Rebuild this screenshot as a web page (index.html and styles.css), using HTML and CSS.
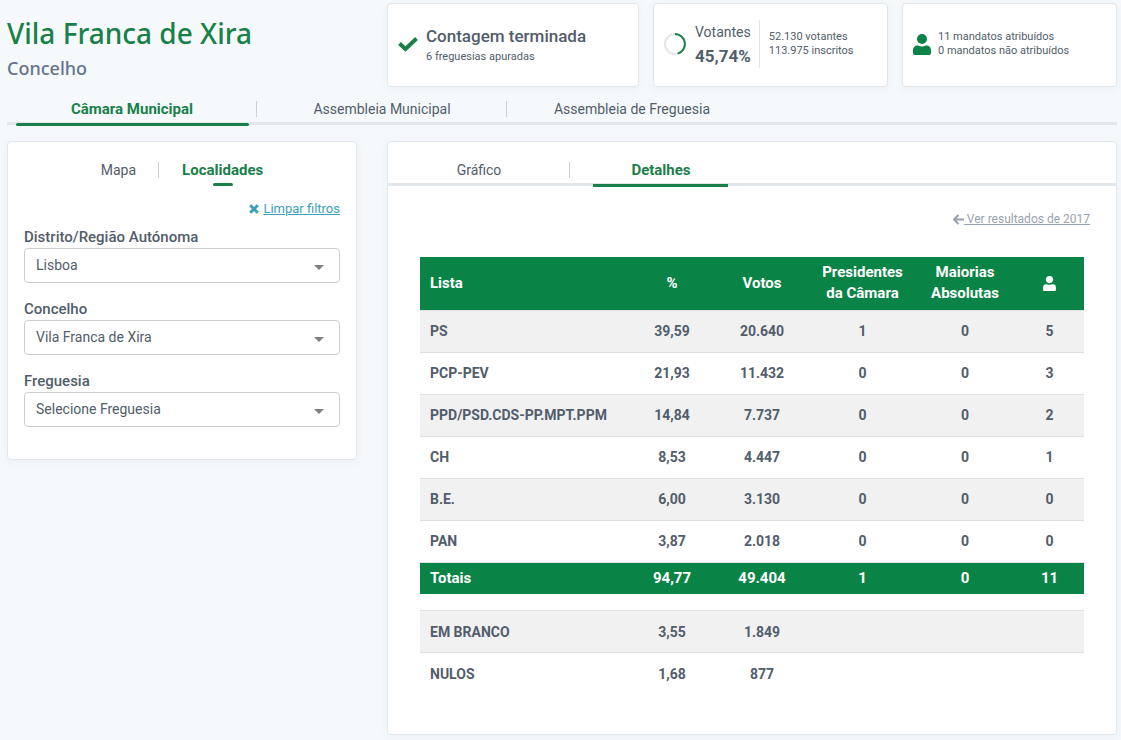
FILE: index.html
```html
<!doctype html>
<html lang="pt">
    <head>
        <meta charset="utf-8">
        <meta name="viewport" content="width=device-width, initial-scale=1">
        <title>Vila Franca de Xira - Resultados</title>
        <link rel="stylesheet" href="styles.css">
    </head>
    <body>
        <svg class="sprite" aria-hidden="true">
            <symbol id="icon-user" viewBox="0 0 18 21">
                <circle cx="9" cy="5" r="5"/>
                <path d="M4.500 11.500h.8a8.500 8.500 0 0 0 7.400 0h.8A4.500 4.500 0 0 1 18 16v3.200a1.800 1.800 0 0 1-1.800 1.800H1.800A1.800 1.800 0 0 1 0 19.200V16a4.500 4.500 0 0 1 4.500-4.500z"/>
            </symbol>
        </svg>

        <header class="header">
            <div class="header-title">
                <h1>Vila Franca de Xira</h1>
                <h2>Concelho</h2>
            </div>
            <div class="card summary">
                <svg class="icon-check" viewBox="0 0 20 16" aria-hidden="true"><path d="M1.500 7.500l6 5.500L18.500 2.500"/></svg>
                <div>
                    <strong class="summary-title">Contagem terminada</strong>
                    <span class="summary-small">6 freguesias apuradas</span>
                </div>
            </div>
            <div class="card summary">
                <svg class="icon-ring" viewBox="0 0 22 22" aria-hidden="true">
                    <circle cx="11" cy="11" r="10"/>
                    <path d="M11 1a10 10 0 0 1 2.700 19.600"/>
                </svg>
                <div class="voters">
                    <span>Votantes</span>
                    <strong>45,74%</strong>
                </div>
                <div class="summary-small">52.130 votantes<br>113.975 inscritos</div>
            </div>
            <div class="card summary">
                <svg class="icon-user" aria-hidden="true"><use href="#icon-user"/></svg>
                <div class="summary-small">11 mandatos atribuídos<br>0 mandatos não atribuídos</div>
            </div>
        </header>

        <nav class="tabs main-tabs">
            <button type="button" class="tab active">Câmara Municipal</button>
            <button type="button" class="tab">Assembleia Municipal</button>
            <button type="button" class="tab">Assembleia de Freguesia</button>
        </nav>

        <main class="content">
            <section class="card filters">
                <div class="filter-tabs">
                    <button type="button" class="tab">Mapa</button>
                    <button type="button" class="tab active">Localidades</button>
                </div>
                <a href="#" class="clear-link">
                    <svg class="icon-times" viewBox="0 0 10 10" aria-hidden="true"><path d="M1.200 1.200l7.600 7.600M8.800 1.200l-7.600 7.600"/></svg>
                    <span>Limpar filtros</span>
                </a>
                <form>
                    <label for="distrito">Distrito/Região Autónoma</label>
                    <div class="select">
                        <select id="distrito" name="distrito">
                            <option selected>Lisboa</option>
                        </select>
                    </div>
                    <label for="concelho">Concelho</label>
                    <div class="select">
                        <select id="concelho" name="concelho">
                            <option selected>Vila Franca de Xira</option>
                        </select>
                    </div>
                    <label for="freguesia">Freguesia</label>
                    <div class="select">
                        <select id="freguesia" name="freguesia">
                            <option value="" selected>Selecione Freguesia</option>
                        </select>
                    </div>
                </form>
            </section>

            <section class="card results">
                <div class="tabs result-tabs">
                    <button type="button" class="tab">Gráfico</button>
                    <button type="button" class="tab active">Detalhes</button>
                </div>
                <a href="#" class="previous-link">
                    <svg class="icon-arrow" viewBox="0 0 11 11" aria-hidden="true"><path d="M5.500 1L1 5.500 5.500 10M1 5.500h10"/></svg>
                    <span>&nbsp;Ver resultados de 2017</span>
                </a>
                <table>
                    <colgroup>
                        <col>
                        <col class="col-percent">
                        <col class="col-votes">
                        <col class="col-presidents">
                        <col class="col-majorities">
                        <col class="col-seats">
                    </colgroup>
                    <thead>
                        <tr>
                            <th>Lista</th>
                            <th>%</th>
                            <th>Votos</th>
                            <th>Presidentes da Câmara</th>
                            <th>Maiorias Absolutas</th>
                            <th><svg class="icon-seats" role="img" aria-label="Mandatos"><use href="#icon-user"/></svg></th>
                        </tr>
                    </thead>
                    <tbody>
                        <tr><td>PS</td><td>39,59</td><td>20.640</td><td>1</td><td>0</td><td>5</td></tr>
                        <tr><td>PCP-PEV</td><td>21,93</td><td>11.432</td><td>0</td><td>0</td><td>3</td></tr>
                        <tr><td>PPD/PSD.CDS-PP.MPT.PPM</td><td>14,84</td><td>7.737</td><td>0</td><td>0</td><td>2</td></tr>
                        <tr><td>CH</td><td>8,53</td><td>4.447</td><td>0</td><td>0</td><td>1</td></tr>
                        <tr><td>B.E.</td><td>6,00</td><td>3.130</td><td>0</td><td>0</td><td>0</td></tr>
                        <tr><td>PAN</td><td>3,87</td><td>2.018</td><td>0</td><td>0</td><td>0</td></tr>
                    </tbody>
                    <tbody class="totals">
                        <tr><td>Totais</td><td>94,77</td><td>49.404</td><td>1</td><td>0</td><td>11</td></tr>
                    </tbody>
                </table>
                <table class="other-votes">
                    <colgroup>
                        <col>
                        <col class="col-percent">
                        <col class="col-votes">
                        <col class="col-presidents">
                        <col class="col-majorities">
                        <col class="col-seats">
                    </colgroup>
                    <tbody>
                        <tr><td>EM BRANCO</td><td>3,55</td><td>1.849</td><td></td><td></td><td></td></tr>
                        <tr><td>NULOS</td><td>1,68</td><td>877</td><td></td><td></td><td></td></tr>
                    </tbody>
                </table>
            </section>
        </main>
    </body>
</html>
```
FILE: styles.css
```css
:root {
    --green: #0a8446;
    --green-dark: #19804a;
    --text: #525d6b;
    --line: #e2e7eb;
    --divider: #c8d0d8;
}

* {
    box-sizing: border-box;
}

body {
    margin: 0;
    padding: 3px 4px 5px 7px;
    background-color: #f5f9fc;
    color: var(--text);
    font-family: Roboto, sans-serif;
    font-size: 14px;
    line-height: 20px;
}

h1, h2 {
    margin: 0;
    font-family: "Noto Sans", sans-serif;
}

h1 {
    color: var(--green-dark);
    font-size: 28px;
    font-weight: 500;
    line-height: 34px;
}

h2 {
    color: #66728c;
    font-size: 18px;
    font-weight: 500;
    line-height: 24px;
}

.sprite {
    display: none;
}

.card {
    background-color: white;
    border: 1px solid var(--line);
    border-radius: 4px;
    box-shadow: 0 2px 8px rgba(80, 110, 140, 0.06);
}

.header {
    display: grid;
    grid-template-columns: 366px 252fr 235fr 215fr;
    column-gap: 14px;
}

.header-title {
    padding-top: 13px;
}

.header-title h2 {
    margin-top: 6px;
}

.summary {
    display: flex;
    align-items: center;
    min-height: 84px;
    padding: 0 10px 2px;
}

.summary-title {
    display: block;
    margin-bottom: 2px;
    font-size: 17px;
    font-weight: 500;
    line-height: 24px;
}

.summary-small {
    display: block;
    font-size: 11px;
    line-height: 14px;
}

.icon-check {
    width: 20px;
    height: 16px;
    margin-right: 8px;
    fill: none;
    stroke: var(--green-dark);
    stroke-width: 4;
}

.icon-ring {
    width: 22px;
    height: 22px;
    margin-right: 9px;
    fill: none;
    stroke: var(--green-dark);
    stroke-width: 2;
}

.icon-ring circle {
    stroke: var(--line);
}

.icon-user {
    width: 18px;
    height: 21px;
    margin-right: 7px;
    fill: var(--green);
}

.voters {
    margin-right: 9px;
    padding-right: 8px;
    border-right: 1px solid var(--line);
    line-height: 24px;
}

.voters span, .voters strong {
    display: block;
}

.voters strong {
    font-size: 17px;
}

.tab {
    position: relative;
    padding: 0;
    border: none;
    background: none;
    color: var(--text);
    font: inherit;
    cursor: pointer;
}

.tab.active {
    color: var(--green-dark);
    font-size: 15px;
    font-weight: 700;
}

.tab.active::after {
    content: "";
    position: absolute;
    height: 3px;
    border-radius: 2px;
    background-color: var(--green-dark);
}

.tabs {
    display: flex;
    border-bottom: 3px solid var(--line);
}

.tab:not(:last-child)::before {
    content: "";
    position: absolute;
    top: 2px;
    right: 0;
    width: 1px;
    height: 16px;
    background-color: var(--divider);
}

.main-tabs {
    padding: 12px 0 3px;
}

.main-tabs .tab {
    width: 250px;
}

.main-tabs .tab.active::after {
    left: 9px;
    right: 8px;
    bottom: -7px;
}

.content {
    display: grid;
    grid-template-columns: 350px 1fr;
    align-items: start;
    column-gap: 30px;
    margin-top: 16px;
}

.filters {
    padding: 18px 16px 32px;
}

.filter-tabs {
    display: flex;
    justify-content: center;
}

.filter-tabs .tab {
    padding: 0 23px;
}

.filter-tabs .tab.active::after {
    left: 50%;
    width: 20px;
    margin-left: -10px;
    bottom: -6px;
}

.clear-link {
    display: flex;
    justify-content: flex-end;
    align-items: center;
    gap: 4px;
    margin: 19px 0 8px;
    color: #3c9fbd;
    font-size: 13px;
    text-decoration: none;
}

.clear-link span, .previous-link span {
    text-decoration: underline;
}

.icon-times {
    width: 10px;
    height: 10px;
    fill: none;
    stroke: currentColor;
    stroke-width: 3;
}

label {
    display: block;
    margin-bottom: 1px;
    font-size: 15px;
    font-weight: 500;
}

.select {
    position: relative;
    margin-bottom: 16px;
}

.select:last-child {
    margin-bottom: 0;
}

.select::after {
    content: "";
    position: absolute;
    top: 17px;
    right: 16px;
    border: 5px solid transparent;
    border-top-color: #808080;
    border-bottom: none;
    pointer-events: none;
}

select {
    display: block;
    width: 100%;
    height: 35px;
    padding: 0 32px 2px 11px;
    border: 1px solid #ccc;
    border-radius: 4px;
    background-color: white;
    color: var(--text);
    font: inherit;
    appearance: none;
}

.results {
    padding: 18px 0 39px;
}

.result-tabs {
    padding-bottom: 3px;
}

.result-tabs .tab {
    width: 182px;
}

.result-tabs .tab.active::after {
    left: 23px;
    right: 24px;
    bottom: -7px;
    border-radius: 0;
}

.previous-link {
    display: flex;
    justify-content: flex-end;
    align-items: center;
    margin: 23px 26px 28px;
    color: #98a2b0;
    font-size: 12px;
    text-decoration: none;
}

.icon-arrow {
    width: 11px;
    height: 11px;
    fill: none;
    stroke: currentColor;
    stroke-width: 2;
}

table {
    width: calc(100% - 64px);
    margin: 0 32px;
    border-collapse: collapse;
    table-layout: fixed;
    font-weight: 700;
    text-align: center;
}

.other-votes {
    margin-top: 16px;
}

.col-percent {
    width: 84px;
}

.col-votes {
    width: 96px;
}

.col-presidents {
    width: 105px;
}

.col-majorities {
    width: 100px;
}

.col-seats {
    width: 69px;
}

th, td {
    height: 42px;
    padding: 0 10px;
    border-top: 1px solid #dee2e6;
}

th {
    height: 53px;
    border: none;
    background-color: var(--green);
    color: white;
    font-size: 15px;
    line-height: 21px;
}

th:first-child, td:first-child {
    text-align: left;
}

tbody tr:nth-child(odd) {
    background-color: #f1f1f1;
}

.totals tr:nth-child(odd) {
    background-color: var(--green);
    color: white;
}

.totals td {
    height: 32px;
    font-size: 15px;
}

.icon-seats {
    display: block;
    width: 13px;
    height: 15px;
    margin: 0 auto;
    fill: white;
}
```
